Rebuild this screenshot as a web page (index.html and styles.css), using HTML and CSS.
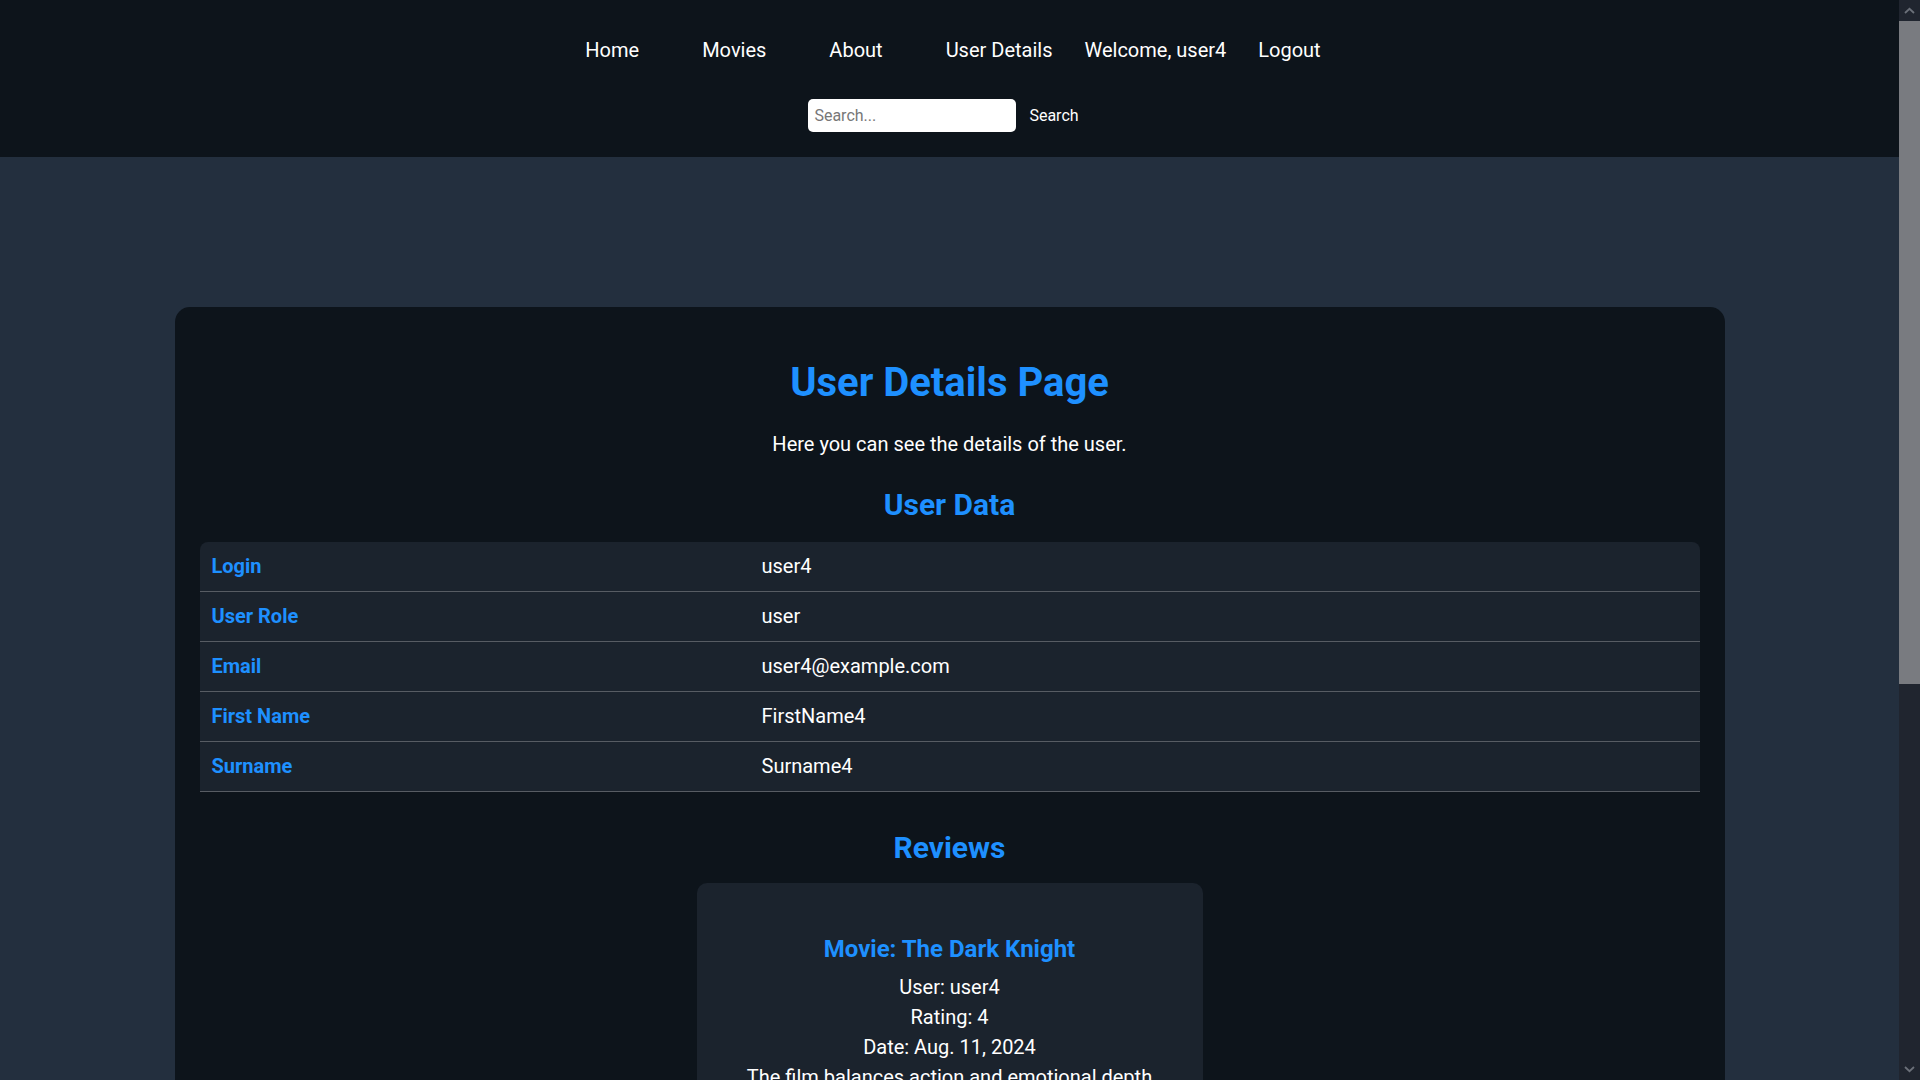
FILE: index.html
```html
<!DOCTYPE html>
<html lang="en">
<head>
<meta charset="utf-8">
<title>User Details</title>
<link rel="stylesheet" href="styles.css">
</head>
<body>
<div class="page">
<header class="site-header">
  <nav class="nav">
    <a class="nav-link nav-main" href="#">Home</a>
    <a class="nav-link nav-main" href="#">Movies</a>
    <a class="nav-link nav-main" href="#">About</a>
    <a class="nav-link" href="#">User Details</a>
    <span class="nav-link">Welcome, user4</span>
    <a class="nav-link" href="#">Logout</a>
  </nav>
  <form class="search">
    <input class="search-input" type="text" placeholder="Search...">
    <button class="search-btn" type="button">Search</button>
  </form>
</header>

<main class="container">
  <h1 class="page-title">User Details Page</h1>
  <p class="subtitle">Here you can see the details of the user.</p>

  <h2 class="section-title">User Data</h2>
  <div class="table-wrap">
    <table class="data-table">
      <tr><th>Login</th><td>user4</td></tr>
      <tr><th>User Role</th><td>user</td></tr>
      <tr><th>Email</th><td>user4@example.com</td></tr>
      <tr><th>First Name</th><td>FirstName4</td></tr>
      <tr><th>Surname</th><td>Surname4</td></tr>
    </table>
  </div>

  <h2 class="section-title reviews-title">Reviews</h2>
  <div class="reviews">
    <div class="review">
      <h3 class="review-movie">Movie: The Dark Knight</h3>
      <p class="review-line">User: user4</p>
      <p class="review-line">Rating: 4</p>
      <p class="review-line">Date: Aug. 11, 2024</p>
      <p class="review-line">The film balances action and emotional depth beautifully, with an unforgettable performance that stays with you long after.</p>
    </div>
    <div class="review">
      <h3 class="review-movie">Movie: Inception</h3>
      <p class="review-line">User: user4</p>
      <p class="review-line">Rating: 5</p>
      <p class="review-line">Date: Aug. 9, 2024</p>
      <p class="review-line">A clever, layered story with stunning visuals, a memorable score and an ending that keeps you thinking.</p>
    </div>
  </div>
</main>
</div>
<div class="scrollbar" aria-hidden="true">
  <div class="sb-btn">
    <svg width="11" height="7" viewBox="0 0 11 7"><path d="M1 6 L5.5 1.8 L10 6" fill="none" stroke="#6b7079" stroke-width="1.8"/></svg>
  </div>
  <div class="sb-thumb"></div>
  <div class="sb-track"></div>
  <div class="sb-btn">
    <svg width="11" height="7" viewBox="0 0 11 7"><path d="M1 1 L5.5 5.2 L10 1" fill="none" stroke="#6b7079" stroke-width="1.8"/></svg>
  </div>
</div>
</body>
</html>
```

FILE: styles.css
```css
* {
  box-sizing: border-box;
}

body {
  margin: 0;
  display: flex;
  align-items: flex-start;
  background: #232f3e;
  font-family: Roboto, "Liberation Sans", Arial, sans-serif;
  color: #ffffff;
}

.page {
  flex: 1;
  min-width: 0;
}

.scrollbar {
  flex: 0 0 21px;
  width: 21px;
  height: 100vh;
  display: flex;
  flex-direction: column;
  background: #20252f;
}

.sb-btn {
  height: 21px;
  flex: 0 0 21px;
  display: flex;
  align-items: center;
  justify-content: center;
}

.sb-thumb {
  flex: 0 0 663px;
  background: #797b80;
}

.sb-track {
  flex: 1;
}

.site-header {
  background: #0d141b;
  padding: 39px 0 25px;
}

.nav {
  display: flex;
  justify-content: center;
  gap: 32px;
  padding-left: 7px;
}

.nav-link {
  color: #ffffff;
  text-decoration: none;
  font-size: 20px;
  line-height: 23px;
}

.nav-main {
  margin-right: 31px;
}

.search {
  display: flex;
  justify-content: center;
  align-items: center;
  margin: 37px 0 0;
}

.search-input {
  width: 208px;
  height: 33px;
  border: none;
  border-radius: 5px;
  background: #ffffff;
  color: #222222;
  font-family: Roboto, "Liberation Sans", Arial, sans-serif;
  font-size: 16px;
  padding: 0 6px;
  outline: none;
}

.search-input::placeholder {
  color: #777777;
}

.search-btn {
  margin-left: 1px;
  background: transparent;
  border: none;
  color: #ffffff;
  font-family: Roboto, "Liberation Sans", Arial, sans-serif;
  font-size: 16px;
  padding: 0 12px;
  height: 33px;
}

.container {
  max-width: 1550px;
  margin: 150px auto;
  padding: 25px;
  background: #0d141b;
  border-radius: 15px;
}

.page-title {
  margin: 27px 0 27px;
  text-align: center;
  color: #1e90ff;
  font-size: 40px;
  font-weight: 700;
  line-height: normal;
}

.subtitle {
  margin: 0;
  text-align: center;
  font-size: 20px;
  line-height: 23px;
}

.section-title {
  margin: 31px 0 20px;
  text-align: center;
  color: #1e90ff;
  font-size: 30px;
  font-weight: 700;
  line-height: 35px;
}

.reviews-title {
  margin: 38px 0 18px;
}

.table-wrap {
  background: #1b232d;
  border-radius: 8px 8px 0 0;
  overflow: hidden;
}

.data-table {
  width: 100%;
  border-collapse: collapse;
  font-size: 20px;
}

.data-table tr {
  border-bottom: 1px solid #575c63;
}

.data-table th,
.data-table td {
  padding: 13px 12px;
  line-height: 23px;
  text-align: left;
}

.data-table th {
  width: 550px;
  color: #1e90ff;
  font-weight: 700;
}

.data-table td {
  color: #ffffff;
}

.reviews {
  display: flex;
  flex-direction: column;
  align-items: center;
  gap: 20px;
}

.review {
  width: 506px;
  padding: 32px 20px;
  background: #1b232d;
  border-radius: 10px;
  text-align: center;
}

.review-movie {
  margin: 20px 0 9px;
  color: #1e90ff;
  font-size: 24px;
  font-weight: 700;
  line-height: 28px;
}

.review-line {
  margin: 0;
  font-size: 20px;
  line-height: 30px;
}
```
